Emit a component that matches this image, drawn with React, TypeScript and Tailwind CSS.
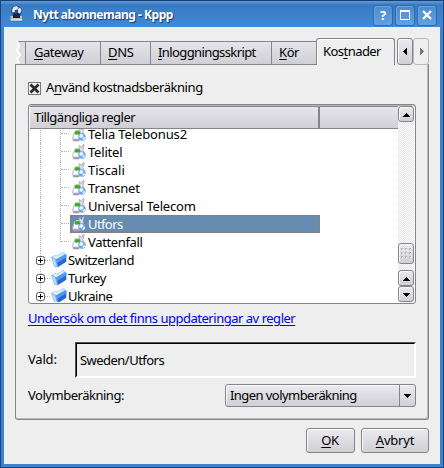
import type { ReactNode } from "react";

const BUTTON = "border border-[#858589] rounded-[3px] bg-linear-to-b from-[#eaeaf0] to-[#cfcfd4] shadow-[inset_1px_1px_0_#f8f8fc]";

function Arrow({ dir, color = "#000" }: { dir: "up" | "down" | "left" | "right"; color?: string }) {
  const path = {
    up: "M3 2h1v1h1v1h1v1h1v1H0V5h1V4h1V3h1z",
    down: "M0 2h7v1H6v1H5v1H4v1H3V5H2V4H1V3H0z",
    left: "M5 0v7H4V6H3V5H2V4H1V3h1V2h1V1h1V0z",
    right: "M2 0v7h1V6h1V5h1V4h1V3H5V2H4V1H3V0z",
  }[dir];
  return (
    <svg width="7" height="7" viewBox="0 0 7 7" shapeRendering="crispEdges">
      <path d={path} fill={color} />
    </svg>
  );
}

function TitleButton({ children }: { children: ReactNode }) {
  return (
    <div className="flex h-[21px] w-5 items-center justify-center rounded-[3px] border border-[#2f68ad] bg-linear-to-b from-[#4a8bd0] to-[#65a0df] shadow-[inset_1px_1px_0_#6aa4df]">
      {children}
    </div>
  );
}

function AppIcon() {
  return (
    <svg width="16" height="18" viewBox="0 0 16 18" className="shrink-0">
      <circle cx="7.500" cy="6" r="5.500" fill="#2a4f8e" />
      <path d="M3 5l1.500-3 3-1 2 1.500-1 2-2.500.5-.5 2-2 .5zM9 4l2-1.500 1.500 3-1.500 3-2-1z" fill="#dfe9fa" />
      <path d="M4 9.500l2-1h3l2 1v4.500H4z" fill="#14213f" />
      <path d="M1.500 11h2.500v2h7v-2h2v4.500H1.500z" fill="#b4bccb" />
      <path d="M2 14h11v1.500H2z" fill="#dfe4ee" />
      <path d="M1.500 16.500h12" stroke="#a0586c" />
    </svg>
  );
}

function ProviderIcon() {
  return (
    <svg width="14" height="16" viewBox="0 0 14 16" className="shrink-0">
      <path d="M7.500 6L7 2l1-.5L9.500 4 11 .5l1.200.4L11 5.500 11.500 8 8 9z" fill="#e4e4ee" stroke="#9a9aae" strokeWidth=".7" />
      <path d="M1.500 8.500L3 5h5l1 4-1 5-2 1H1.500L.5 12z" fill="#e6e4ef" stroke="#b2afc4" strokeWidth=".7" />
      <path d="M2 9h4v3H2z" fill="#fff" />
      <path d="M2.500 7.500L3.500 5h4l1 2.500-1.500 1H3.500z" fill="#3ea82c" />
      <path d="M4 4h3.500v1.200H3.700z" fill="#a9dd92" />
      <path d="M1 13.200h6V15H1.500z" fill="#9c90b4" />
      <circle cx="10" cy="11" r="3.700" fill="#6ca6ec" />
      <path d="M7 11l1.500-3 2.500.5.5 2-2 1.500zM10.500 12l2.500-1v1.500l-2 1.700z" fill="#e6f7ff" />
    </svg>
  );
}

function FolderIcon() {
  return (
    <svg width="16" height="16" viewBox="0 0 16 16" className="shrink-0">
      <path d="M.5 5l4-1.500 1.500.5 6-3.500 2 .7.500 2-9 9z" fill="#e2f1ff" stroke="#8dbdf0" strokeWidth=".7" />
      <path d="M2.500 6.500l3 .5 8-5 1.500 1v6.500L6.500 15 4 14.500z" fill="#7db8f5" />
      <path d="M5.500 7.500L15.300 2.500v7.300L7 15z" fill="#2568d2" />
      <path d="M5.500 7.500l9.800-5v2.700l-9.300 6z" fill="#4f97ef" />
      <path d="M.7 5.500L4 7l2.500 8-3-.8z" fill="#c6e3fc" stroke="#5a9de4" strokeWidth=".6" />
    </svg>
  );
}

function Tab({ label, mnemonic, className }: { label: string; mnemonic: string; className: string }) {
  const [before, after] = label.split(mnemonic);
  return (
    <div className={`h-6 shrink-0 whitespace-nowrap border-y border-r border-[#858589] bg-linear-to-b from-[#e4e4e9] to-[#cfcfd5] leading-[20px] ${className}`}>
      {before}
      <Key>{mnemonic}</Key>
      {after}
    </div>
  );
}

function Key({ children }: { children: ReactNode }) {
  return <span className="underline decoration-1 underline-offset-2">{children}</span>;
}

const providers = [
  { name: "Telia Telebonus2", spacing: "tracking-[-0.12px]" },
  { name: "Telitel", spacing: "tracking-[-0.2px]" },
  { name: "Tiscali", spacing: "tracking-[-0.05px]" },
  { name: "Transnet", spacing: "tracking-[-0.2px]" },
  { name: "Universal Telecom", spacing: "tracking-[-0.2px]" },
  { name: "Utfors", spacing: "tracking-[-0.6px]" },
  { name: "Vattenfall", spacing: "tracking-[-0.35px]" },
];

function ProviderRow({ name, spacing, last }: { name: string; spacing: string; last: boolean }) {
  const selected = name === "Utfors";
  return (
    <div className="flex h-[18px] shrink-0">
      <div className="ml-[10px] w-5 border-l border-dotted border-[#b4b4b4]" />
      <div className={`w-[10px] border-l border-dotted border-[#b4b4b4] ${last ? "h-[9px]" : ""}`}>
        <div className="h-[9px] w-2 border-b border-dotted border-[#b4b4b4]" />
      </div>
      <div className={`flex w-[250px] items-center gap-[2px] pl-[2px] ${selected ? "bg-[#678cb2] text-white outline-1 -outline-offset-1 outline-dotted outline-[#a8734b]" : ""}`}>
        <ProviderIcon />
        <span className={`leading-[18px] ${spacing}`}>{name}</span>
      </div>
    </div>
  );
}

function CountryRow({ name }: { name: string }) {
  return (
    <div className="flex h-[18px] shrink-0 items-center">
      <svg width="21" height="18" viewBox="0 0 21 18" className="shrink-0">
        <path d="M10.500 0v18M15 9.500h6" stroke="#b4b4b4" strokeDasharray="1 1" shapeRendering="crispEdges" />
        <rect x="6.500" y="5.500" width="8" height="8" rx="2" fill="#fff" stroke="#555" />
        <path d="M8 9.500h5M10.500 7v5" stroke="#000" shapeRendering="crispEdges" />
      </svg>
      <FolderIcon />
      <span className="ml-px leading-[18px] tracking-[-0.45px]">{name}</span>
    </div>
  );
}

function TreeView() {
  return (
    <div className="flex h-[200px] w-[388px] rounded-[3px] border border-[#858589] bg-white p-px shadow-[inset_0_1px_0_#b7b7b7]">
      <div className="flex w-[368px] flex-col overflow-hidden">
        <div className="flex h-[23px] shrink-0 border-y border-[#858589] bg-linear-to-b from-[#e6e6eb] to-[#cfcfd5] leading-[21px]">
          <div className="w-[290px] border-r-2 border-[#858589] pl-1 tracking-[-0.49px]">Tillgängliga regler</div>
        </div>
        <div className="flex min-h-0 flex-1 flex-col overflow-hidden">
          <div className="-mt-1 flex flex-col">
            {providers.map((p, i) => (
              <ProviderRow key={p.name} {...p} last={i === providers.length - 1} />
            ))}
            <CountryRow name="Switzerland" />
            <CountryRow name="Turkey" />
            <CountryRow name="Ukraine" />
          </div>
        </div>
      </div>
      <div className="flex w-4 flex-col bg-[repeating-conic-gradient(#e4e4e4_0_25%,#fff_0_50%)] bg-[length:2px_2px]">
        <div className={`flex h-4 items-center justify-center ${BUTTON}`}><Arrow dir="up" /></div>
        <div className="flex-1" />
        <div className={`mb-[6px] flex h-[21px] items-center justify-center ${BUTTON}`}>
          <svg width="11" height="11" viewBox="0 0 11 11" shapeRendering="crispEdges">
            {[0, 4, 8].flatMap((x) => [0, 4, 8].map((y) => (
              <g key={`${x}-${y}`}>
                <rect x={x} y={y} width="2" height="2" fill="#b2b2b7" />
                <rect x={x + 1} y={y + 1} width="1" height="1" fill="#fff" />
              </g>
            )))}
          </svg>
        </div>
        <div className={`flex h-4 items-center justify-center ${BUTTON}`}><Arrow dir="up" /></div>
        <div className={`flex h-4 items-center justify-center ${BUTTON}`}><Arrow dir="down" /></div>
      </div>
    </div>
  );
}

export default function App() {
  return (
    <div className="flex h-[468px] w-[444px] flex-col overflow-hidden border-x border-b border-[#1e457a] bg-[#3c82cf] font-['Noto_Sans',sans-serif] text-[13px] text-black">
      <div className="flex h-[27px] shrink-0 items-center border-t border-[#1c3e6c] bg-linear-to-b from-[#5e9bdc] via-[#397bc2] via-15% to-[#4089d8] pl-2 pr-[6px]">
        <AppIcon />
        <span className="ml-2 pt-[2px] text-[12px] font-bold tracking-[-0.47px] text-white [text-shadow:1px_1px_1px_#173a68]">Nytt abonnemang - Kppp</span>
        <div className="ml-auto flex gap-[2px] pt-[2px]">
          <TitleButton><span className="text-[13px] font-bold leading-none text-white">?</span></TitleButton>
          <TitleButton><div className="h-[10px] w-[10px] border border-t-2 border-white" /></TitleButton>
          <TitleButton>
            <svg width="10" height="10" viewBox="0 0 10 10"><path d="M1 1l8 8M9 1L1 9" stroke="#fff" strokeWidth="2.200" /></svg>
          </TitleButton>
        </div>
      </div>
      <div className="mx-[3px] mb-[3px] flex flex-1 flex-col bg-[#eee] pl-[11px] pr-[11px] pt-[11px]">
        <div className="z-10 flex h-[27px] shrink-0 items-end">
          <svg width="11" height="24" viewBox="0 0 11 24" className="shrink-0">
            <path d="M3 0h8v24H3l-2-5 3-4-2-4 3-4z" fill="#dcdce1" />
            <path d="M3 .5h8M0 23.500h11M10.500 0v24" stroke="#858589" />
            <path d="M2 0l2 5-2 4 3 5-3 4 2 4" stroke="#fff" strokeWidth="2" fill="none" />
          </svg>
          <Tab label="Gateway" mnemonic="G" className="w-[75px] pl-2 tracking-[-0.45px]" />
          <Tab label="DNS" mnemonic="D" className="w-[50px] pl-[7px] tracking-[-0.3px]" />
          <Tab label="Inloggningsskript" mnemonic="I" className="w-[121px] pl-[7px] tracking-[-0.6px]" />
          <Tab label="Kör" mnemonic="K" className="w-[44px] border-r-0 pl-[7px] tracking-[-0.4px]" />
          <div className="h-[27px] w-[79px] shrink-0 rounded-t-[3px] border border-b-0 border-[#858589] bg-[#eee] pl-[6px] leading-[25px] tracking-[-0.55px] shadow-[inset_1px_1px_0_#fff]">
            Kos<Key>t</Key>nader
          </div>
          <div className={`ml-[2px] flex h-[27px] w-4 shrink-0 items-center justify-center ${BUTTON}`}><Arrow dir="left" /></div>
          <div className="flex h-[27px] w-4 shrink-0 items-center justify-center rounded-[3px] border border-[#b8b8b8] bg-[#eee]"><Arrow dir="right" color="#777" /></div>
        </div>
        <div className="-mt-px flex h-[356px] w-[414px] flex-col rounded-b-[3px] border border-t-0 border-[#858589] px-3 shadow-[inset_-1px_-1px_0_#bbb]">
          <div className="mt-[14px] flex h-[20px] items-center gap-[5px] tracking-[-0.43px]">
            <div className="flex h-[13px] w-[13px] items-center justify-center border border-[#77777b] bg-[#f5f5f5]">
              <svg width="11" height="11" viewBox="0 0 11 11" className="shrink-0"><path d="M1.500 1.500l8 8M9.500 1.500l-8 8" stroke="#2a2a2a" strokeWidth="2.800" /></svg>
            </div>
            <span>A<Key>n</Key>vänd kostnadsberäkning</span>
          </div>
          <div className="mt-[6px]"><TreeView /></div>
          <a className="mt-1 h-[20px] leading-[20px] tracking-[-0.48px] text-[#0000ee] underline underline-offset-2">Undersök om det finns uppdateringar av regler</a>
          <div className="mt-[14px] flex h-9 items-center">
            <span className="w-[47px] tracking-[-0.2px]">Vald:</span>
            <div className="h-9 w-[341px] border border-b-white border-l-[#555] border-r-white border-t-[#555]">
              <div className="h-full border border-b-white border-l-black border-r-white border-t-black pl-[3px] leading-[33px] tracking-[-0.53px]">Sweden/Utfors</div>
            </div>
          </div>
          <div className="mt-[6px] flex h-[23px] items-center">
            <span className="w-[197px] tracking-[-0.48px]">Volymberäkning:</span>
            <div className={`flex h-[23px] w-[191px] leading-[21px] ${BUTTON}`}>
              <span className="flex-1 pl-1 tracking-[-0.56px]">Ingen volymberäkning</span>
              <div className="flex w-4 items-center justify-center border-l border-[#858589]"><Arrow dir="down" /></div>
            </div>
          </div>
        </div>
        <div className="mt-2 flex justify-end gap-[6px]">
          <div className={`h-[25px] w-[49px] pr-px text-center leading-[23px] tracking-[-0.4px] ${BUTTON}`}><Key>O</Key>K</div>
          <div className={`h-[25px] w-[68px] text-center leading-[23px] tracking-[-0.2px] ${BUTTON}`}><Key>A</Key>vbryt</div>
        </div>
      </div>
    </div>
  );
}
